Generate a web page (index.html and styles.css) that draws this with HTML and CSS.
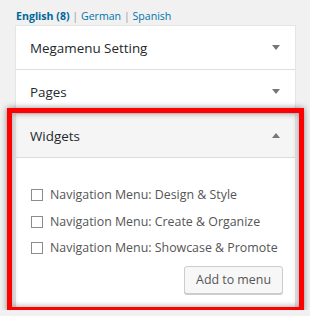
FILE: index.html
```html
<!DOCTYPE html>
<html lang="en">
<head>
  <meta charset="UTF-8">
  <title>Menus</title>
  <link rel="stylesheet" href="styles.css">
</head>
<body>
  <div class="lang-links">
    <a href="#" class="current">English (8)</a> <span class="sep">|</span>
    <a href="#">German</a> <span class="sep">|</span>
    <a href="#">Spanish</a>
  </div>

  <div class="accordion">
    <div class="section">
      <h3 class="section-title">Megamenu Setting <span class="arrow"></span></h3>
    </div>
    <div class="section">
      <h3 class="section-title">Pages <span class="arrow"></span></h3>
    </div>
    <div class="section open">
      <h3 class="section-title">Widgets <span class="arrow up"></span></h3>
      <div class="section-body">
        <ul class="checklist">
          <li><label><input type="checkbox"> Navigation Menu: Design &amp; Style</label></li>
          <li><label><input type="checkbox"> Navigation Menu: Create &amp; Organize</label></li>
          <li><label><input type="checkbox"> Navigation Menu: Showcase &amp; Promote</label></li>
        </ul>
        <div class="actions">
          <button type="button" class="button">Add to menu</button>
        </div>
      </div>
      <div class="highlight"></div>
    </div>
  </div>
</body>
</html>
```

FILE: styles.css
```css
* {
  margin: 0;
  padding: 0;
  box-sizing: border-box;
}

body {
  font-family: "Open Sans", "Noto Sans", sans-serif;
  font-size: 13px;
  background: #f1f1f1;
  color: #444;
  padding: 7px 15px 0;
  overflow: hidden;
}

.lang-links {
  font-size: 10.6px;
  line-height: 18px;
  padding-left: 1px;
  color: #999;
}

.lang-links a {
  color: #0073aa;
  text-decoration: none;
}

.lang-links a.current {
  font-weight: 700;
  color: #00669b;
}

.accordion {
  width: 281px;
  border: 1px solid #e5e5e5;
  background: #fff;
}

.section {
  border-bottom: 1px solid #dedede;
  position: relative;
}

.section-title {
  display: flex;
  justify-content: space-between;
  align-items: center;
  height: 43px;
  padding: 0 15px 0 14px;
  font-size: 13.4px;
  font-weight: 400;
  color: #23282d;
}

.arrow {
  width: 0;
  height: 0;
  border-left: 4px solid transparent;
  border-right: 4px solid transparent;
  border-top: 5px solid #72777c;
}

.arrow.up {
  border-top: 0;
  border-bottom: 5px solid #72777c;
}

.open .section-title {
  background: #f5f5f5;
  height: 44px;
  border-bottom: 1px solid #dcdcdc;
}

.section-body {
  padding: 30px 12px 14px 14px;
}

.checklist {
  list-style: none;
}

.checklist li {
  height: 26.5px;
  line-height: 14px;
}

.checklist label {
  display: flex;
  align-items: center;
  gap: 7px;
  color: #555;
  font-size: 12.4px;
  white-space: nowrap;
}

.checklist input {
  appearance: none;
  flex: none;
  width: 12px;
  height: 12px;
  margin-left: 1px;
  border: 1px solid #8c8c8c;
  background: #fff;
}

.actions {
  display: flex;
  justify-content: flex-end;
  margin-top: -2px;
}

.button {
  font-family: inherit;
  font-size: 12.4px;
  color: #555;
  height: 28px;
  padding: 0 11px;
  background: #f7f7f7;
  border: 1px solid #ccc;
  border-radius: 3px;
  box-shadow: 0 1px 0 #ccc;
}

.highlight {
  position: absolute;
  top: -6px;
  left: -9px;
  width: 297px;
  height: 204px;
  border: 5px solid #ff0000;
  box-shadow: 0 0 6px rgba(0, 0, 0, 0.45), inset 0 0 6px rgba(0, 0, 0, 0.4);
  pointer-events: none;
}
```
